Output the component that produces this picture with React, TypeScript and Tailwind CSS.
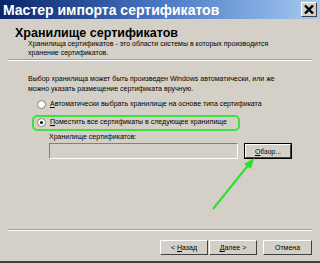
import React from "react";

function Radio({ checked }: { checked?: boolean }) {
  return (
    <span className="relative inline-block w-[9px] h-[9px] rounded-full bg-white border border-[#808080] shrink-0">
      {checked && <span className="absolute left-[2px] top-[2px] w-[3px] h-[3px] rounded-full bg-black" />}
    </span>
  );
}

function Btn({ children, className = "" }: { children: React.ReactNode; className?: string }) {
  return (
    <div className={"h-[15px] bg-[#d4d0c8] border border-t-white border-l-white border-r-[#404040] border-b-[#404040] flex items-center justify-center text-[7px] leading-none " + className}>
      {children}
    </div>
  );
}

export default function App() {
  return (
    <div
      className="relative w-[320px] h-[263px] bg-[#d4d0c8] overflow-hidden text-black"
      style={{ fontFamily: '"Liberation Sans", Arial, sans-serif' }}
    >
      <div className="h-[19px] bg-gradient-to-r from-[#0a246a] via-[#4a78c4] to-[#a6caf0] flex items-center justify-between pl-[3px] pr-[3px]">
        <span className="text-white font-bold text-[14px] leading-none">Мастер импорта сертификатов</span>
        <div className="shrink-0 w-[16px] h-[15px] bg-[#d4d0c8] border border-t-white border-l-white border-r-[#404040] border-b-[#404040] flex items-center justify-center">
          <svg width="10" height="9" viewBox="0 0 10 9" className="block">
            <path d="M1 0.5 L9 8.5 M9 0.5 L1 8.5" stroke="#000000" strokeWidth="2.4" fill="none" />
          </svg>
        </div>
      </div>
      <div className="pl-[15px] pt-[8px]">
        <div className="font-bold text-[12.5px] leading-[12px]">Хранилище сертификатов</div>
        <div className="pl-[13px] text-[7px] leading-[9px]">
          <div>Хранилища сертификатов - это области системы в которых производится</div>
          <div>хранение сертификатов.</div>
        </div>
      </div>
      <div className="mx-[8px] mt-[2px] h-[2px] border-t border-t-[#a0a0a0] border-b border-b-white" />
      <div className="pl-[28px] pt-[13px] text-[7px] leading-[10px]">
        <div>Выбор хранилища может быть произведен Windows автоматически, или же</div>
        <div>можно указать размещение сертификата вручную.</div>
      </div>
      <div className="pl-[37px] mt-[5px] flex items-center gap-[4px] text-[7px] h-[10px]">
        <Radio />
        <span><u>А</u>втоматически выбрать хранилище на основе типа сертификата</span>
      </div>
      <div className="relative pl-[37px] mt-[8px] flex items-center gap-[4px] text-[7px] h-[10px]">
        <Radio checked />
        <span><u>П</u>оместить все сертификаты в следующее хранилище</span>
        <div className="absolute left-[32px] top-[-2px] w-[208px] h-[16px] rounded-[5px] border-2 border-[#3ee03e]" />
      </div>
      <div className="pl-[49px] mt-[5px] text-[7px] leading-[9px]">Хранилище сертификатов:</div>
      <div className="pl-[49px] mt-[2px] flex gap-[6px]">
        <div className="w-[189px] h-[16px] bg-[#d4d0c8] border border-t-[#808080] border-l-[#808080] border-r-white border-b-white" />
        <div className="w-[48px] h-[16px] border border-black">
          <Btn className="w-full h-full"><u>О</u>бзор...</Btn>
        </div>
      </div>
      <div className="mx-[8px] mt-[70px] h-[2px] border-t border-t-[#a0a0a0] border-b border-b-white" />
      <div className="flex justify-end pr-[8px] mt-[9px]">
        <Btn className="w-[48px]">&lt;&nbsp;<u>Н</u>азад</Btn>
        <Btn className="w-[48px] ml-[1px]"><u>Д</u>алее&nbsp;&gt;</Btn>
        <Btn className="w-[49px] ml-[6px]">Отмена</Btn>
      </div>
      <div className="absolute left-0 right-0 bottom-0 h-[2px] bg-[#404040]" />
      <svg className="absolute left-0 top-0 pointer-events-none" width="320" height="263">
        <line x1="213" y1="209" x2="250" y2="163" stroke="#2ee02e" strokeWidth="2" />
        <polygon points="254,158 244,164 251,169" fill="#2ee02e" />
      </svg>
    </div>
  );
}
